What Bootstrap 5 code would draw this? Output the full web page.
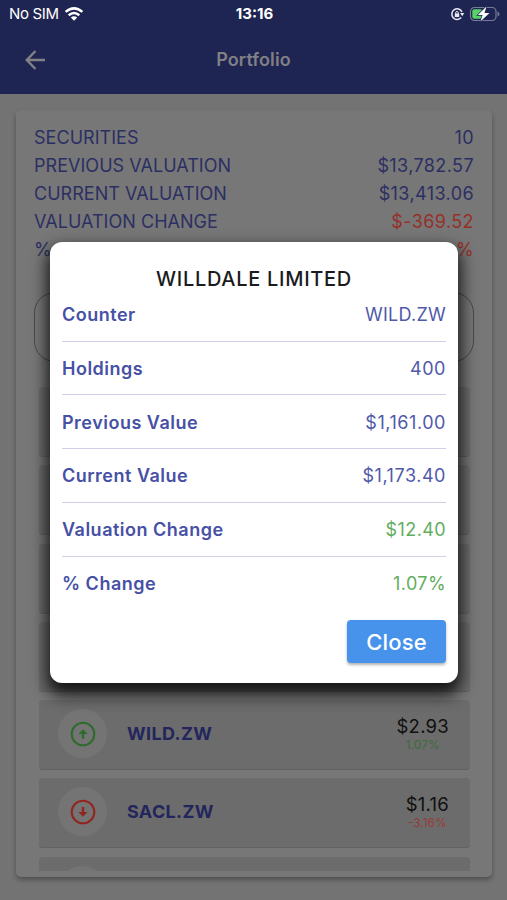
<!DOCTYPE html>
<html lang="en">
<head>
<meta charset="utf-8">
<meta name="viewport" content="width=device-width, initial-scale=1">
<title>Portfolio</title>
<link href="https://cdn.jsdelivr.net/npm/bootstrap@5.3.0/dist/css/bootstrap.min.css" rel="stylesheet">
<style>
body{font-family:Inter,"Liberation Sans",sans-serif;background:#737373;height:900px;overflow:hidden;font-size:18px;line-height:28px;color:#2c2f63}
.top-area{background:#1f2552;height:94px}
.status-bar{height:28px;font-size:15px;color:#fff;line-height:28px;padding:0 7px 0 9px}
.carrier{letter-spacing:-.35px;margin-right:1px}
.title-bar{height:62px;padding:0 25px;color:#808085;margin-top:1px}
.side-slot{width:44px}
.page-title{font-size:18px;font-weight:600;letter-spacing:.1px}
.portfolio-panel{margin:16px 15px 0 16px;height:767px;background:#777;border-radius:5px;box-shadow:0 3px 5px rgba(0,0,0,.3);padding:14px 18px 6px 18px;overflow:hidden}
.summary{letter-spacing:.04px}
.summary span:last-child{letter-spacing:.4px}
.summary .loss{color:#963029;letter-spacing:.3px}
.search-outline{height:70px;flex:none;border:1px solid #494949;border-radius:21px;margin-top:28px}
.holdings{margin:25px 4px 0 5px;gap:8.3px;overflow:hidden;flex:1 1 0;min-height:0}
.holding{height:70px;flex:none;background:#6c6c6c;border-radius:4px;border-bottom:1px solid #626262;padding:0 21px 2px 19px}
.direction{width:49px;height:49px;background:#747474}
.symbol{font-weight:700;color:#23265c;letter-spacing:.35px;margin-left:20px}
.price{color:#101010;font-size:18.5px;line-height:22px;letter-spacing:.25px;text-align:right}
.percent{font-size:12px;line-height:16px;text-align:center}
.gain-dim{color:#3d6b3b}.loss-dim{color:#973b36}
.detail-dialog{left:50px;top:242px;width:408px;height:441px;border-radius:12px;background:#fff;padding:23px 12px 0;box-shadow:0 9px 16px 3px rgba(0,0,0,.82);color:#4650a5}
.dialog-title{font-size:20px;line-height:28px;font-weight:500;color:#1b1b1d;letter-spacing:.7px;margin:0}
.detail-row{height:53.75px;border-bottom:1.5px solid #cfd0e8;padding-top:2px}
.detail-row:first-child{height:48.5px;padding:0 0 4px}
.detail-row:last-child{border-bottom:0;padding-top:1px}
.detail-row dt{font-weight:600;letter-spacing:.5px}
.detail-row dd{margin:0;color:#5059aa;letter-spacing:.55px}
.detail-row:first-child dd{letter-spacing:.25px}
.detail-row .gain{color:#62ad5e;letter-spacing:.4px}
.close-button{width:99px;height:43px;background:#4792ea;color:#fff;border:0;border-radius:4px;font-size:22px;font-weight:500;line-height:28px;padding:2px 0 0;box-shadow:0 2px 3px rgba(0,0,0,.3);margin-top:9.5px;letter-spacing:.2px}
</style>
<script src="https://cdn.jsdelivr.net/npm/bootstrap@5.3.0/dist/js/bootstrap.bundle.min.js"></script>
</head>
<body class="position-relative">
<header class="top-area">
  <div class="status-bar d-flex align-items-center justify-content-between">
    <div class="d-flex align-items-center gap-1 col-4">
      <span class="carrier">No SIM</span>
      <svg width="20" height="15" viewBox="0 0 20 15" fill="none" stroke="#fff" stroke-width="2.5"><path d="M1.6 4.9Q10-2.2 18.4 4.9M4.7 8.2Q10 3.8 15.3 8.2"/><path d="M10 13.8 6.8 10.6Q10 8.1 13.2 10.6Z" fill="#fff" stroke="none"/></svg>
    </div>
    <span class="fw-bold">13:16</span>
    <div class="d-flex align-items-center justify-content-end gap-1 col-4">
      <svg width="15" height="14" viewBox="0 0 15 14"><path d="M12 5A5.3 5.3 0 1 0 11.2 10.6" fill="none" stroke="#e8e9f2" stroke-width="1.5"/><path d="M10 6h4.2l-1.9 3.2z" fill="#e8e9f2"/><path d="M5.7 7V5.8a1.3 1.3 0 0 1 2.6 0V7" fill="none" stroke="#e8e9f2"/><rect x="4.8" y="6.6" width="4.4" height="3.3" rx=".5" fill="#e8e9f2"/></svg>
      <svg width="31" height="16" viewBox="0 0 31 16"><rect x="1.5" y="1.5" width="25.5" height="13" rx="4" fill="none" stroke="#777b98" stroke-width="1.2"/><path d="M28.5 5.5q2 .8 2 2.5t-2 2.5z" fill="#777b98"/><rect x="3.3" y="3.3" width="10" height="9.4" rx="2" fill="#5bd267"/><path d="M17.5.5 8.8 9h4.8l-2.2 6.5L20.5 7h-5z" fill="#fff" stroke="#1f2552" stroke-width="1.4" paint-order="stroke"/></svg>
    </div>
  </div>
  <div class="title-bar d-flex align-items-center justify-content-between">
    <div class="side-slot d-flex"><svg width="21" height="20" viewBox="0 0 21 20" fill="none" stroke="#828286" stroke-width="2.4"><path d="M20 10H2M10.5 1 1.8 10l8.7 9"/></svg></div>
    <span class="page-title">Portfolio</span>
    <div class="side-slot"></div>
  </div>
</header>
<main class="portfolio-panel d-flex flex-column">
  <div class="summary">
    <div class="d-flex justify-content-between"><span>SECURITIES</span><span>10</span></div>
    <div class="d-flex justify-content-between"><span>PREVIOUS VALUATION</span><span>$13,782.57</span></div>
    <div class="d-flex justify-content-between"><span>CURRENT VALUATION</span><span>$13,413.06</span></div>
    <div class="d-flex justify-content-between"><span>VALUATION CHANGE</span><span class="loss">$-369.52</span></div>
    <div class="d-flex justify-content-between"><span>%</span><span class="loss">%</span></div>
  </div>
  <div class="search-outline"></div>
  <div class="holdings d-flex flex-column">
    <div class="holding"></div><div class="holding"></div><div class="holding"></div><div class="holding"></div>
    <div class="holding d-flex align-items-center">
      <div class="direction rounded-circle d-flex align-items-center justify-content-center"><svg width="26" height="26" viewBox="0 0 26 26" fill="none" stroke="#2f6b2d" stroke-width="2.1"><circle cx="13" cy="13" r="11.3"/><path d="M13 17.8V11" stroke-width="2.4"/><path d="m8.4 13 4.6-4.8 4.6 4.8z" fill="#2f6b2d" stroke="none"/></svg></div>
      <span class="symbol">WILD.ZW</span>
      <div class="ms-auto"><div class="price">$2.93</div><div class="percent gain-dim">1.07%</div></div>
    </div>
    <div class="holding d-flex align-items-center">
      <div class="direction rounded-circle d-flex align-items-center justify-content-center"><svg width="26" height="26" viewBox="0 0 26 26" fill="none" stroke="#92261f" stroke-width="2.1"><circle cx="13" cy="13" r="11.3"/><path d="M13 8v6.5" stroke-width="2.4"/><path d="m8.4 13 4.6 4.8 4.6-4.8z" fill="#92261f" stroke="none"/></svg></div>
      <span class="symbol">SACL.ZW</span>
      <div class="ms-auto"><div class="price">$1.16</div><div class="percent loss-dim">-3.16%</div></div>
    </div>
    <div class="holding d-flex align-items-center"><div class="direction rounded-circle"></div></div>
  </div>
</main>
<section class="detail-dialog position-absolute" role="dialog" aria-labelledby="dialog-name">
  <h1 class="dialog-title text-center" id="dialog-name">WILLDALE LIMITED</h1>
  <dl class="mb-0">
    <div class="detail-row d-flex align-items-center justify-content-between"><dt>Counter</dt><dd>WILD.ZW</dd></div>
    <div class="detail-row d-flex align-items-center justify-content-between"><dt>Holdings</dt><dd>400</dd></div>
    <div class="detail-row d-flex align-items-center justify-content-between"><dt>Previous Value</dt><dd>$1,161.00</dd></div>
    <div class="detail-row d-flex align-items-center justify-content-between"><dt>Current Value</dt><dd>$1,173.40</dd></div>
    <div class="detail-row d-flex align-items-center justify-content-between"><dt>Valuation Change</dt><dd class="gain">$12.40</dd></div>
    <div class="detail-row d-flex align-items-center justify-content-between"><dt>% Change</dt><dd class="gain">1.07%</dd></div>
  </dl>
  <div class="text-end"><button class="btn close-button" type="button">Close</button></div>
</section>
</body>
</html>
